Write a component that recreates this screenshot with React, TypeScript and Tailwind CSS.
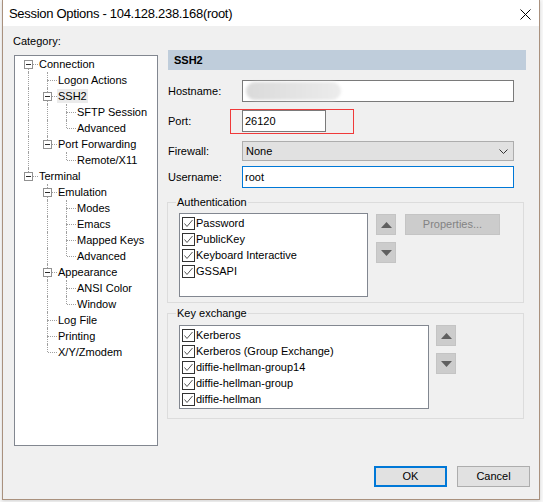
import React from "react";

type TreeNode = { label: string; level: number; open?: boolean; selected?: boolean };

const NODES: TreeNode[] = [
  { label: "Connection", level: 0, open: true },
  { label: "Logon Actions", level: 1 },
  { label: "SSH2", level: 1, open: true, selected: true },
  { label: "SFTP Session", level: 2 },
  { label: "Advanced", level: 2 },
  { label: "Port Forwarding", level: 1, open: true },
  { label: "Remote/X11", level: 2 },
  { label: "Terminal", level: 0, open: true },
  { label: "Emulation", level: 1, open: true },
  { label: "Modes", level: 2 },
  { label: "Emacs", level: 2 },
  { label: "Mapped Keys", level: 2 },
  { label: "Advanced", level: 2 },
  { label: "Appearance", level: 1, open: true },
  { label: "ANSI Color", level: 2 },
  { label: "Window", level: 2 },
  { label: "Log File", level: 1 },
  { label: "Printing", level: 1 },
  { label: "X/Y/Zmodem", level: 1 },
];

const AUTH = ["Password", "PublicKey", "Keyboard Interactive", "GSSAPI"];
const KEX = ["Kerberos", "Kerberos (Group Exchange)", "diffie-hellman-group14", "diffie-hellman-group", "diffie-hellman"];

function hasNextSibling(i: number) {
  const lvl = NODES[i].level;
  for (let j = i + 1; j < NODES.length; j++) {
    if (NODES[j].level < lvl) return false;
    if (NODES[j].level === lvl) return true;
  }
  return false;
}

function ancestorContinues(i: number, lvl: number) {
  for (let j = i - 1; j >= 0; j--) {
    if (NODES[j].level === lvl) return hasNextSibling(j);
  }
  return false;
}

function TreeRow({ node, index }: { node: TreeNode; index: number }) {
  const cells = [];
  for (let k = 0; k < node.level; k++) {
    cells.push(
      <span key={k} className="relative w-[19px] h-4 shrink-0">
        {ancestorContinues(index, k) && (
          <span className="absolute left-[9px] top-0 bottom-0 border-l border-dotted border-[#a0a0a0]" />
        )}
      </span>
    );
  }
  const hasKids = !!node.open;
  return (
    <div className="flex h-4 items-center">
      {cells}
      <span className="relative w-[19px] h-4 shrink-0">
        {index !== 0 && <span className="absolute left-[9px] top-0 h-[8px] border-l border-dotted border-[#a0a0a0]" />}
        {hasNextSibling(index) && (
          <span className="absolute left-[9px] top-[8px] bottom-0 border-l border-dotted border-[#a0a0a0]" />
        )}
        <span className="absolute left-[10px] right-0 top-[8px] border-t border-dotted border-[#a0a0a0]" />
        {hasKids && (
          <span className="absolute left-[5px] top-[4px] w-[9px] h-[9px] border border-[#919191] bg-white flex items-center justify-center">
            <span className="w-[5px] h-px bg-[#2c2c2c]" />
          </span>
        )}
      </span>
      <span className={`px-[1px] leading-[14px] whitespace-nowrap ${node.selected ? "bg-[#ebebeb]" : ""}`}>{node.label}</span>
    </div>
  );
}

function Check() {
  return (
    <svg width="13" height="13" viewBox="0 0 13 13" className="shrink-0">
      <rect x="0.5" y="0.5" width="12" height="12" fill="#fff" stroke="#333" />
      <path d="M2.5 6.5 L5 9.5 L10.5 3" fill="none" stroke="#555" strokeWidth="1" />
    </svg>
  );
}

function CheckList({ items, width }: { items: string[]; width: string }) {
  return (
    <div className={`${width} h-[84px] border border-[#828790] bg-white pt-[1px] pl-[2px] shrink-0`}>
      {items.map((t) => (
        <div key={t} className="flex items-center h-4">
          <Check />
          <span className="ml-[1px] whitespace-nowrap">{t}</span>
        </div>
      ))}
    </div>
  );
}

function ArrowBtn({ up }: { up?: boolean }) {
  return (
    <div className="w-[20px] h-[21px] bg-[#cccccc] border border-[#c4c4c4] flex items-center justify-center">
      <svg width="11" height="6" viewBox="0 0 11 6">
        {up ? <path d="M0 6 L5.5 0 L11 6 Z" fill="#5f5f5f" /> : <path d="M0 0 L11 0 L5.5 6 Z" fill="#5f5f5f" />}
      </svg>
    </div>
  );
}

function FieldRow({ label, children, mt }: { label: string; children: React.ReactNode; mt: string }) {
  return (
    <div className={`flex items-center ${mt}`}>
      <span className="w-[75px] pl-[1px] shrink-0">{label}</span>
      {children}
    </div>
  );
}

export default function App() {
  return (
    <div className="w-[543px] h-[502px] bg-[#f7f7f7] font-['Liberation_Sans',Arial,sans-serif] text-[11px] text-black">
      <div className="ml-[2px] w-[538px] h-[500px] flex flex-col border-l border-r border-b border-[#a9917e] shadow-[0_1px_3px_rgba(0,0,0,0.15)]">
        <div className="h-[26px] bg-white flex items-center justify-between pl-[6px] pr-[8px] shrink-0">
          <span className="text-[13px] tracking-[-0.3px] leading-none">Session Options - 104.128.238.168(root)</span>
          <svg width="11" height="11" viewBox="0 0 11 11" className="mt-[2px]">
            <path d="M0.5 0.5 L10.5 10.5 M10.5 0.5 L0.5 10.5" stroke="#000" strokeWidth="1" />
          </svg>
        </div>

        <div className="flex-1 flex flex-col bg-[#f0f0f0] pt-[8px] pb-[12px]">
          <div className="flex">
            <div className="pl-[10px] w-[164px] shrink-0">
              <div className="leading-[14px]">Category:</div>
              <div className="mt-[7px] ml-[1px] w-[144px] h-[391px] border border-[#828790] bg-white pl-[4px]">
                {NODES.map((n, i) => (
                  <TreeRow key={i} node={n} index={i} />
                ))}
              </div>
            </div>

            <div className="mt-[16px] w-[357px]">
              <div className="ml-[1px] w-[358px] h-[20px] bg-[#bfcddb] flex items-center pl-[6px] font-bold">SSH2</div>

              <FieldRow label="Hostname:" mt="mt-[10px]">
                <div className="w-[272px] h-[22px] border border-[#7a7a7a] bg-white flex items-center pl-[3px]">
                  <div className="w-[95px] h-[18px] rounded-full bg-gradient-to-r from-[#dadada] via-[#e3e3e3] to-[#ececec] blur-[1.5px]" />
                </div>
              </FieldRow>

              <FieldRow label="Port:" mt="mt-[8px]">
                <div className="relative">
                  <div className="w-[84px] h-[22px] border border-[#7a7a7a] bg-white flex items-center pl-[2px]">26120</div>
                  <div className="absolute left-[-11px] top-0 w-[122px] h-[23px] ring-1 ring-[#f03a3a]" />
                </div>
              </FieldRow>

              <FieldRow label="Firewall:" mt="mt-[9px]">
                <div className="w-[272px] h-[20px] border border-[#adadad] bg-[#e1e1e1] flex items-center justify-between pl-[3px] pr-[5px]">
                  <span>None</span>
                  <svg width="9" height="5" viewBox="0 0 9 5">
                    <path d="M0.5 0.5 L4.5 4.5 L8.5 0.5" fill="none" stroke="#333" strokeWidth="1" />
                  </svg>
                </div>
              </FieldRow>

              <FieldRow label="Username:" mt="mt-[5px]">
                <div className="w-[272px] h-[22px] border border-[#0078d7] bg-white flex items-center pl-[2px]">root</div>
              </FieldRow>

              <fieldset className="mt-[7px] w-[357px] border border-[#dcdcdc] px-[11px] pt-[4px] pb-[5px]">
                <legend className="-ml-[3px] px-[1px] leading-[14px]">Authentication</legend>
                <div className="flex">
                  <CheckList items={AUTH} width="w-[189px]" />
                  <div className="ml-[8px] mt-[1px] flex flex-col gap-[7px]">
                    <ArrowBtn up />
                    <ArrowBtn />
                  </div>
                  <div className="ml-[9px] mt-[1px] w-[95px] h-[21px] bg-[#cccccc] border border-[#c4c4c4] flex items-center justify-center text-[#838383]">
                    Properties...
                  </div>
                </div>
              </fieldset>

              <fieldset className="mt-[3px] w-[357px] border border-[#dcdcdc] px-[11px] pt-[5px] pb-[9px]">
                <legend className="-ml-[3px] px-[1px] leading-[14px]">Key exchange</legend>
                <div className="flex">
                  <CheckList items={KEX} width="w-[250px]" />
                  <div className="ml-[7px] flex flex-col gap-[7px]">
                    <ArrowBtn up />
                    <ArrowBtn />
                  </div>
                </div>
              </fieldset>
            </div>
          </div>

          <div className="mt-auto flex justify-end gap-[10px] pr-[9px]">
            <div className="w-[73px] h-[21px] border-2 border-[#0078d7] bg-[#e1e1e1] flex items-center justify-center">OK</div>
            <div className="w-[73px] h-[21px] border border-[#adadad] bg-[#e1e1e1] flex items-center justify-center">Cancel</div>
          </div>
        </div>
      </div>
    </div>
  );
}
